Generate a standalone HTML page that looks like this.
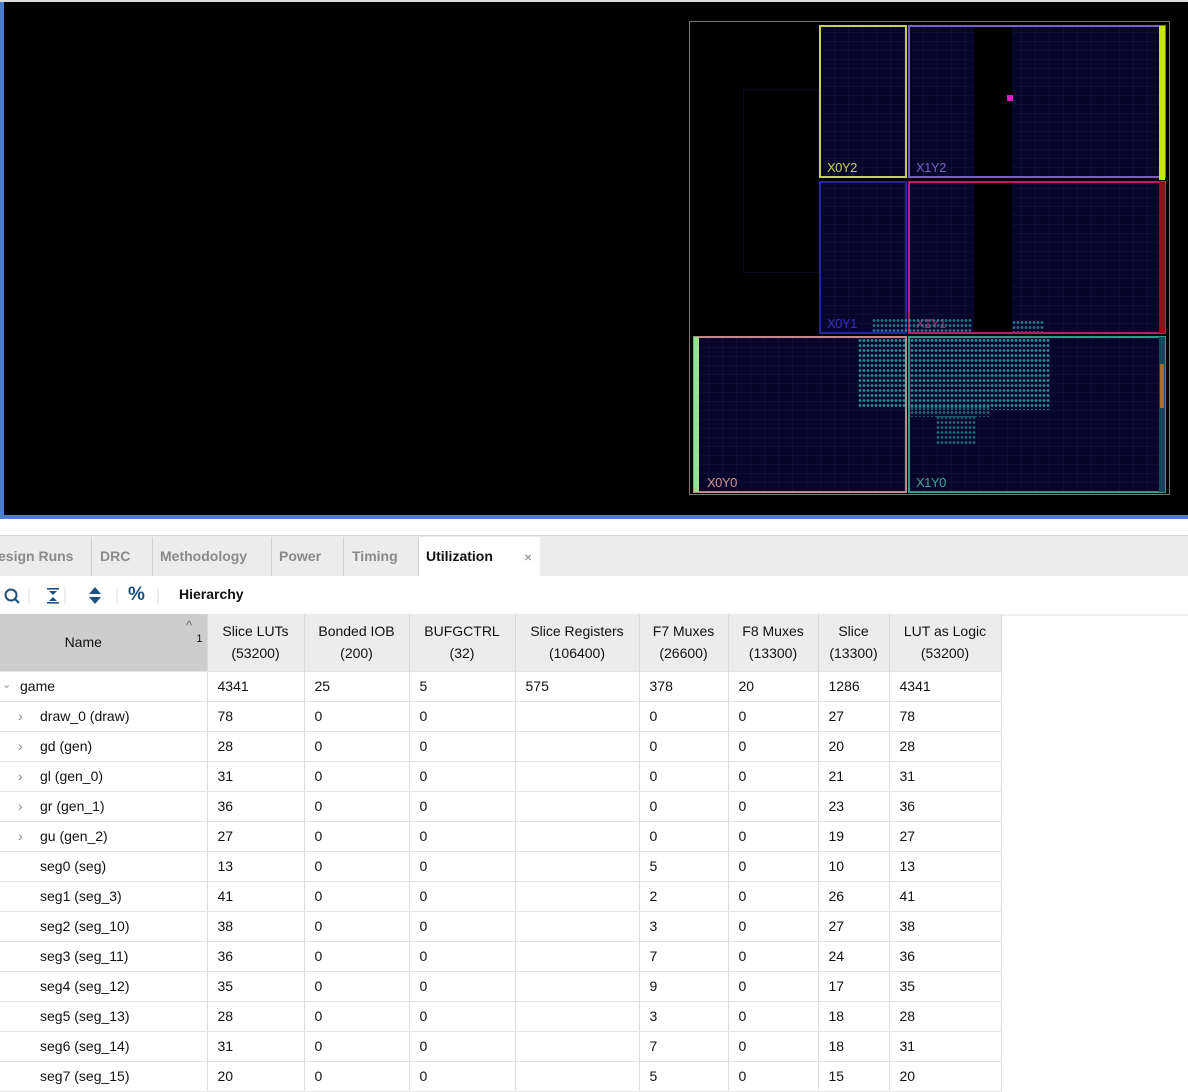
<!DOCTYPE html><html><head><style>
*{margin:0;padding:0;box-sizing:border-box}
body{width:1188px;height:1086px;overflow:hidden;background:#fff;font-family:"Liberation Sans",Arial,sans-serif;position:relative}
.a{position:absolute}
.reg{position:absolute;border:2px solid;background-color:#06062a;background-image:repeating-linear-gradient(90deg,transparent 0 13px,rgba(30,30,90,.35) 13px 14px),repeating-linear-gradient(0deg,transparent 0 8px,rgba(30,30,90,.3) 8px 9px)}
.lbl{position:absolute;font-size:13px;bottom:1px;left:6px;letter-spacing:-.5px}
.tab{position:absolute;top:537px;height:39px;line-height:38px;font-size:14px;font-weight:bold;color:#8a8a8a;border-right:1px solid #cfcfcf}
table{position:absolute;left:0;top:614px;border-collapse:collapse;font-size:14px;color:#111}
td,th{border-right:1px solid #ddd;border-bottom:1px solid #e4e4e4;height:30px;padding:0 0 0 10px;text-align:left;font-weight:normal;white-space:nowrap}
th{background:#ececec;height:57px;text-align:center;padding:0;line-height:22px;border-right:1px solid #d8d8d8}
.dots{position:absolute;background-image:radial-gradient(circle,#2fa3a8 1.2px,transparent 1.6px);background-size:4px 5px}
.ch{position:absolute;left:18px;color:#888}
</style></head><body>
<div class="a" style="left:0;top:0;width:1188px;height:519px;background:#4a7fcf"></div>
<div class="a" style="left:0;top:0;width:1188px;height:2px;background:#ddd"></div>
<div class="a" style="left:4px;top:2px;width:1184px;height:513px;background:#000"></div>
<div class="a" style="left:689px;top:21px;width:481px;height:474px;border:1px solid #777"></div>
<div class="a" style="left:743px;top:89px;width:76px;height:184px;border:1px solid #0a0a26"></div>
<div class="reg" style="left:819px;top:25px;width:88px;height:153px;border-color:#c9cf55"><span class="lbl" style="color:#c9cf55">X0Y2</span></div>
<div class="reg" style="left:908px;top:25px;width:258px;height:153px;border-color:#7a5fc0"><span class="lbl" style="color:#7a5fc0">X1Y2</span></div>
<div class="a" style="left:974px;top:27px;width:38px;height:149px;background:#000"></div>
<div class="a" style="left:1007px;top:95px;width:6px;height:6px;background:#e018c8"></div>
<div class="a" style="left:1159px;top:26px;width:6px;height:154px;background:#c4e60a"></div>
<div class="reg" style="left:819px;top:181px;width:88px;height:153px;border-color:#2424a0"><span class="lbl" style="color:#3030c0">X0Y1</span></div>
<div class="reg" style="left:908px;top:181px;width:258px;height:153px;border-color:#c0186a"><span class="lbl" style="color:#c0186a">X1Y1</span></div>
<div class="a" style="left:974px;top:183px;width:38px;height:149px;background:#000"></div>
<div class="a" style="left:1159px;top:182px;width:6px;height:151px;background:#8a1418"></div>
<div class="reg" style="left:693px;top:336px;width:214px;height:157px;border-color:#c08888"><span class="lbl" style="color:#d09090;left:12px">X0Y0</span></div>
<div class="a" style="left:694px;top:337px;width:5px;height:155px;background:#9ae08a"></div>
<div class="reg" style="left:908px;top:336px;width:258px;height:157px;border-color:#2f9a8a"><span class="lbl" style="color:#3aa898">X1Y0</span></div>
<div class="a" style="left:1159px;top:337px;width:6px;height:155px;background:#15485e"></div>
<div class="a" style="left:1160px;top:364px;width:4px;height:44px;background:#d8701a;opacity:.8"></div>
<div class="dots" style="left:858px;top:338px;width:48px;height:70px;opacity:.85"></div>
<div class="dots" style="left:910px;top:338px;width:140px;height:72px;opacity:.85"></div>
<div class="dots" style="left:872px;top:318px;width:100px;height:14px;opacity:.7"></div>
<div class="dots" style="left:1012px;top:320px;width:32px;height:12px;opacity:.7"></div>
<div class="dots" style="left:936px;top:415px;width:40px;height:30px;opacity:.6"></div>
<div class="dots" style="left:910px;top:405px;width:80px;height:12px;opacity:.6"></div>

<div class="a" style="left:0;top:535px;width:1188px;height:41px;background:#ececec;border-top:1px solid #d8d8d8"></div>
<div class="tab" style="left:0;width:92px"><span style="margin-left:-2px">esign Runs</span></div>
<div class="tab" style="left:93px;width:60px;padding-left:7px">DRC</div>
<div class="tab" style="left:153px;width:119px;padding-left:7px">Methodology</div>
<div class="tab" style="left:272px;width:72px;padding-left:7px">Power</div>
<div class="tab" style="left:344px;width:75px;padding-left:8px">Timing</div>
<div class="a" style="left:419px;top:537px;width:121px;height:40px;background:#fff"></div>
<div class="a" style="left:426px;top:537px;line-height:38px;font-size:14px;font-weight:bold;color:#111">Utilization</div>
<div class="a" style="left:524px;top:549px;font-size:14px;color:#888">×</div>

<div class="a" style="left:0;top:576px;width:1188px;height:40px;background:#fff;border-bottom:2px solid #eee"></div>
<svg class="a" style="left:0;top:584px" width="160" height="24">
<circle cx="11" cy="11" r="5.5" fill="none" stroke="#1f4f7c" stroke-width="2"/><line x1="15" y1="15" x2="19" y2="19" stroke="#1f4f7c" stroke-width="2.2"/>
<line x1="29" y1="3" x2="29" y2="20" stroke="#ddd"/>
<g fill="#1f4f7c"><rect x="47" y="4" width="12" height="1.6"/><rect x="47" y="18" width="12" height="1.6"/><path d="M49 7h8l-4 4z M49 17h8l-4-4z"/></g>
<line x1="65" y1="3" x2="65" y2="20" stroke="#ddd"/>
<g fill="#1f4f7c"><path d="M89 10h12l-6-7z M89 13h12l-6 7z"/></g>
<line x1="117" y1="3" x2="117" y2="20" stroke="#ddd"/>
<line x1="158" y1="3" x2="158" y2="20" stroke="#ddd"/>
</svg>
<div class="a" style="left:128px;top:584px;font-size:19px;color:#1f4f7c;font-weight:bold">%</div>
<div class="a" style="left:179px;top:586px;font-size:14px;font-weight:bold;color:#111">Hierarchy</div>

<table>
<tr><th style="width:207px;background:#cdcdcd;position:relative"><span style="position:relative;left:-20px">Name</span><span style="position:absolute;right:14px;top:0;color:#777;font-size:14px">^</span><span style="position:absolute;right:4px;top:14px;font-size:11px">1</span></th><th style="width:97px">Slice LUTs<br>(53200)</th><th style="width:105px">Bonded IOB<br>(200)</th><th style="width:106px">BUFGCTRL<br>(32)</th><th style="width:124px">Slice Registers<br>(106400)</th><th style="width:89px">F7 Muxes<br>(26600)</th><th style="width:90px">F8 Muxes<br>(13300)</th><th style="width:71px">Slice<br>(13300)</th><th style="width:112px">LUT as Logic<br>(53200)</th></tr>
<tr><td style="padding-left:20px;position:relative"><span style="position:absolute;left:2px;color:#999;font-size:11px">&#8964;</span>game</td><td>4341</td><td>25</td><td>5</td><td>575</td><td>378</td><td>20</td><td>1286</td><td>4341</td></tr>
<tr><td style="padding-left:40px;position:relative"><span class="ch">›</span>draw_0 (draw)</td><td>78</td><td>0</td><td>0</td><td></td><td>0</td><td>0</td><td>27</td><td>78</td></tr>
<tr><td style="padding-left:40px;position:relative"><span class="ch">›</span>gd (gen)</td><td>28</td><td>0</td><td>0</td><td></td><td>0</td><td>0</td><td>20</td><td>28</td></tr>
<tr><td style="padding-left:40px;position:relative"><span class="ch">›</span>gl (gen_0)</td><td>31</td><td>0</td><td>0</td><td></td><td>0</td><td>0</td><td>21</td><td>31</td></tr>
<tr><td style="padding-left:40px;position:relative"><span class="ch">›</span>gr (gen_1)</td><td>36</td><td>0</td><td>0</td><td></td><td>0</td><td>0</td><td>23</td><td>36</td></tr>
<tr><td style="padding-left:40px;position:relative"><span class="ch">›</span>gu (gen_2)</td><td>27</td><td>0</td><td>0</td><td></td><td>0</td><td>0</td><td>19</td><td>27</td></tr>
<tr><td style="padding-left:40px">seg0 (seg)</td><td>13</td><td>0</td><td>0</td><td></td><td>5</td><td>0</td><td>10</td><td>13</td></tr>
<tr><td style="padding-left:40px">seg1 (seg_3)</td><td>41</td><td>0</td><td>0</td><td></td><td>2</td><td>0</td><td>26</td><td>41</td></tr>
<tr><td style="padding-left:40px">seg2 (seg_10)</td><td>38</td><td>0</td><td>0</td><td></td><td>3</td><td>0</td><td>27</td><td>38</td></tr>
<tr><td style="padding-left:40px">seg3 (seg_11)</td><td>36</td><td>0</td><td>0</td><td></td><td>7</td><td>0</td><td>24</td><td>36</td></tr>
<tr><td style="padding-left:40px">seg4 (seg_12)</td><td>35</td><td>0</td><td>0</td><td></td><td>9</td><td>0</td><td>17</td><td>35</td></tr>
<tr><td style="padding-left:40px">seg5 (seg_13)</td><td>28</td><td>0</td><td>0</td><td></td><td>3</td><td>0</td><td>18</td><td>28</td></tr>
<tr><td style="padding-left:40px">seg6 (seg_14)</td><td>31</td><td>0</td><td>0</td><td></td><td>7</td><td>0</td><td>18</td><td>31</td></tr>
<tr><td style="padding-left:40px">seg7 (seg_15)</td><td>20</td><td>0</td><td>0</td><td></td><td>5</td><td>0</td><td>15</td><td>20</td></tr>
</table>
</body></html>
